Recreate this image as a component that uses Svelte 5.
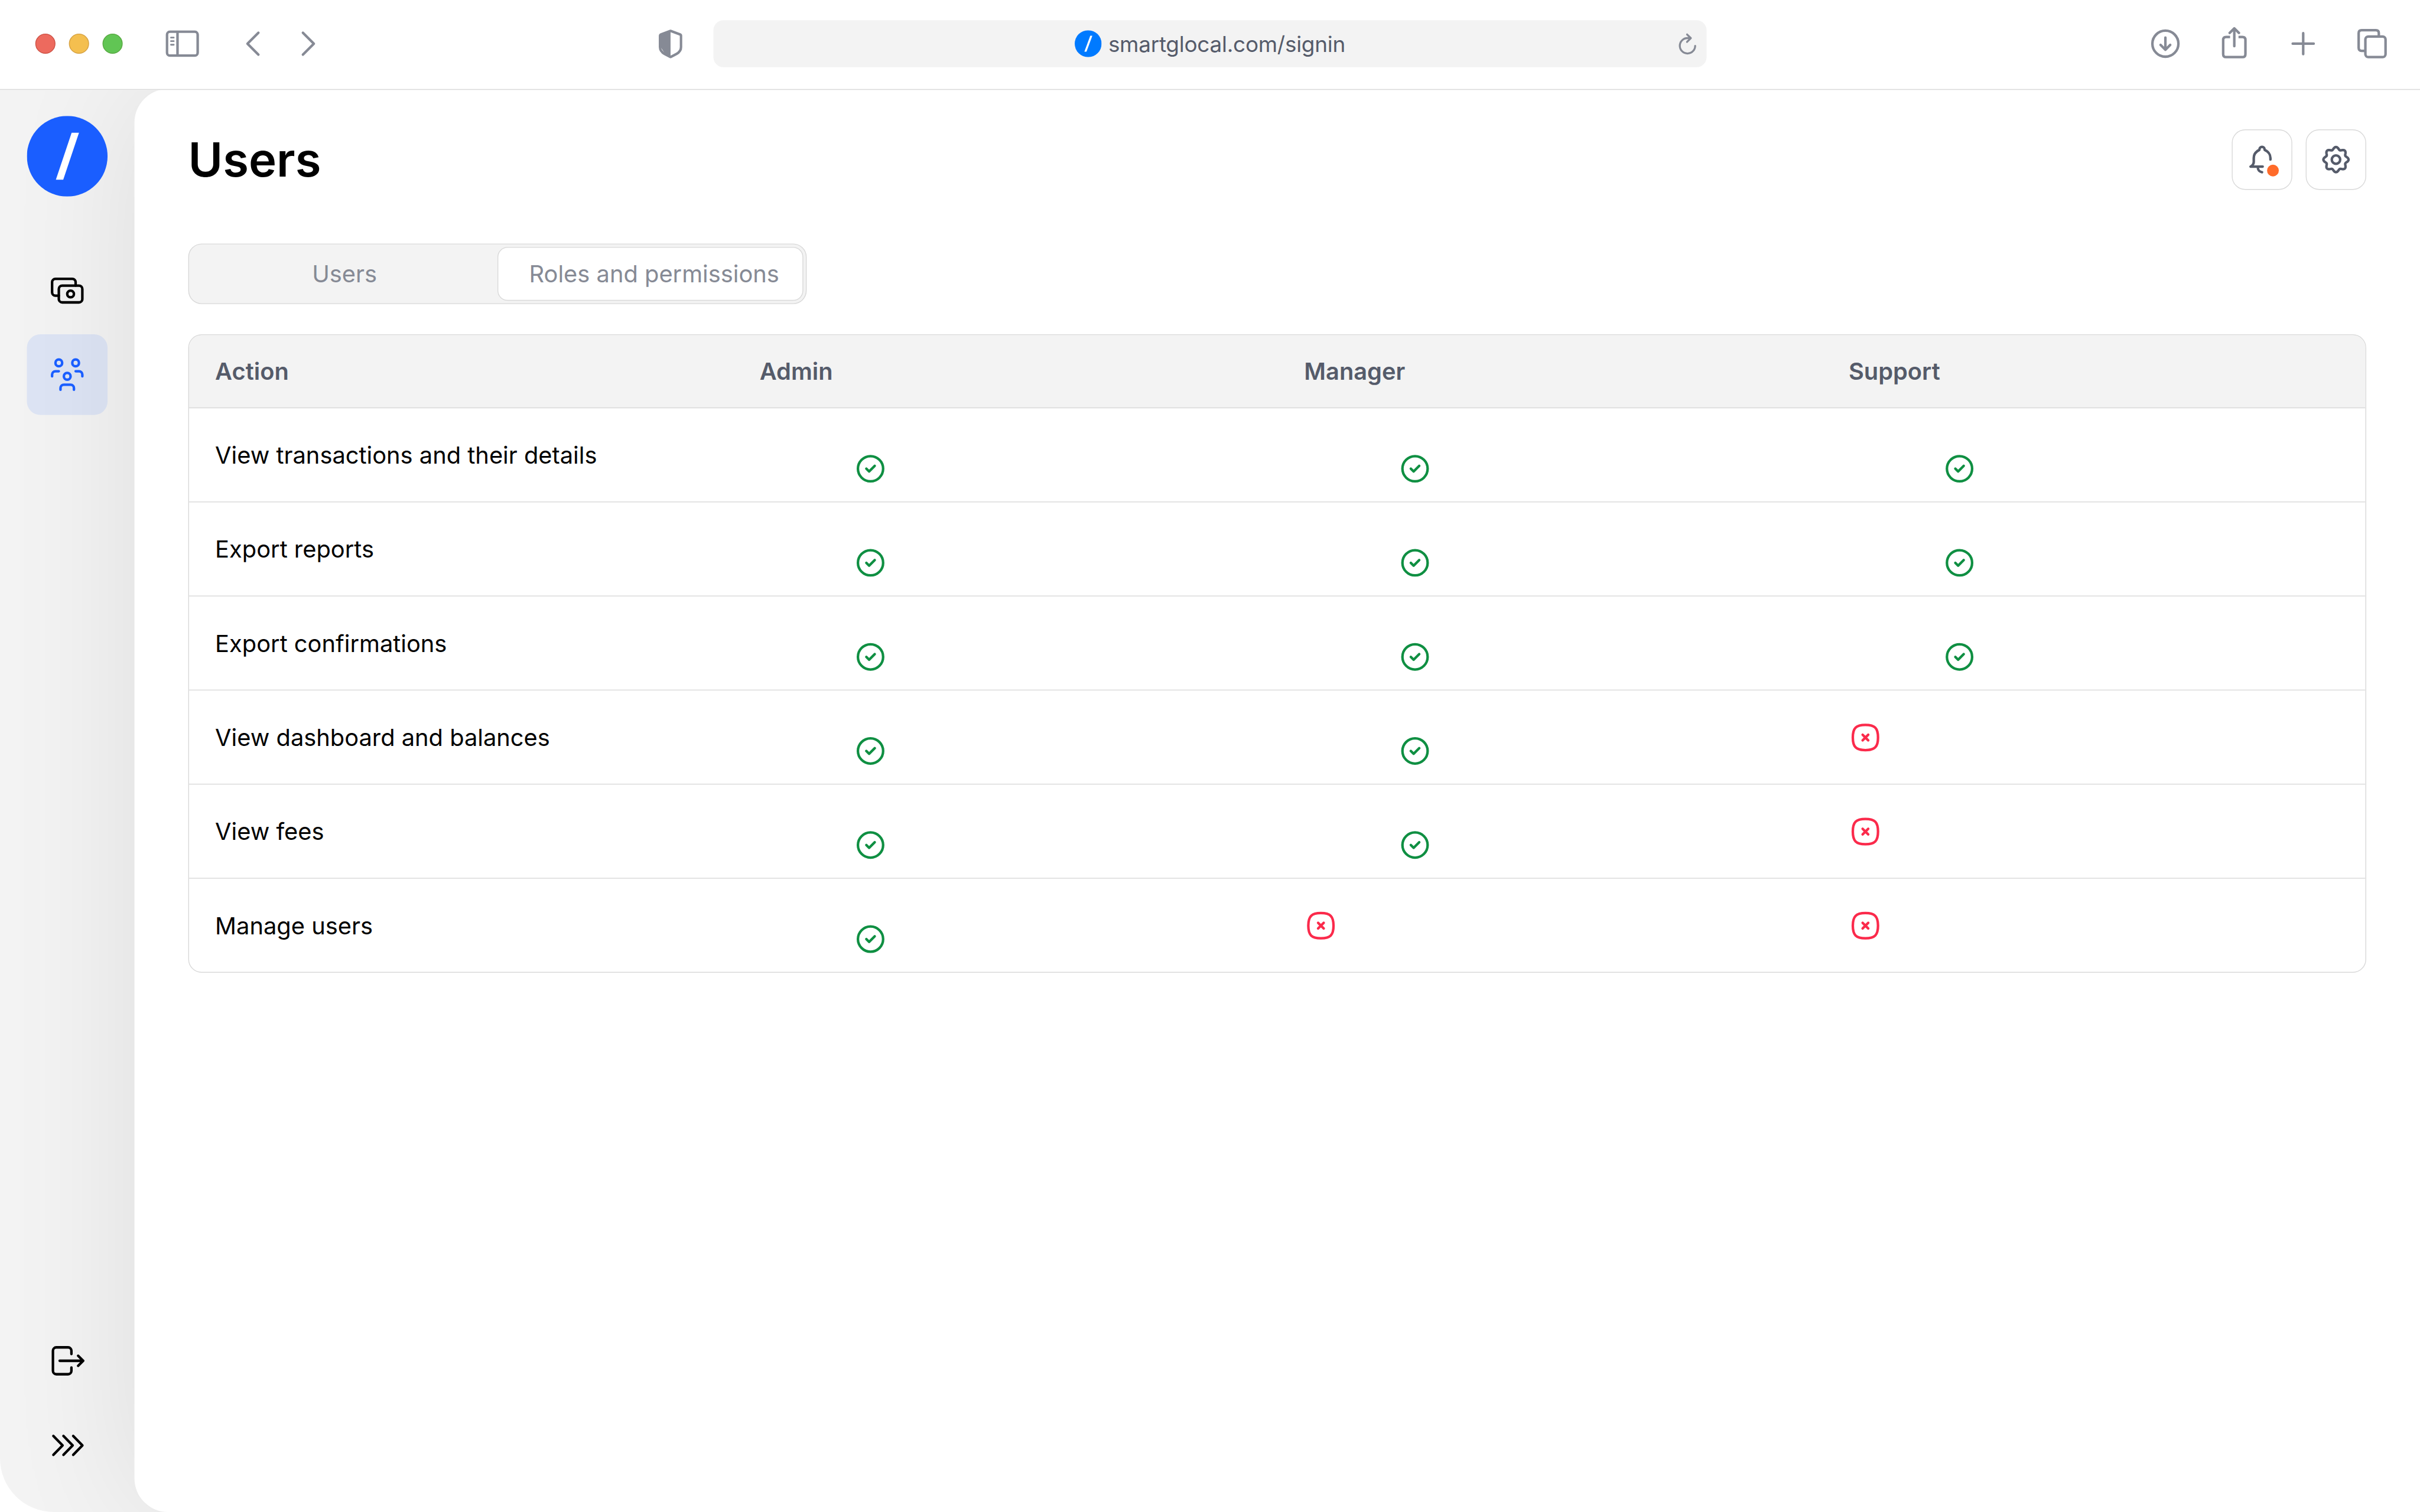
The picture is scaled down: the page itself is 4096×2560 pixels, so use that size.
<script lang="ts">
  type Access = boolean;

  const columns = ['Action', 'Admin', 'Manager', 'Support'];

  const permissions: { action: string; access: Access[] }[] = [
    { action: 'View transactions and their details', access: [true, true, true] },
    { action: 'Export reports', access: [true, true, true] },
    { action: 'Export confirmations', access: [true, true, true] },
    { action: 'View dashboard and balances', access: [true, true, false] },
    { action: 'View fees', access: [true, true, false] },
    { action: 'Manage users', access: [true, false, false] }
  ];

  const tabs = ['Users', 'Roles and permissions'];
  let activeTab = $state(1);

  // Eight-lobed outline around the centre of a 20x20 box
  function gearPath() {
    const points: string[] = [];
    for (let i = 0; i <= 160; i++) {
      const a = (i / 160) * Math.PI * 2;
      const r = 6.77 + 0.74 * Math.cos(8 * a) - 0.03 * Math.cos(16 * a);
      points.push(`${(10 + r * Math.sin(a)).toFixed(2)} ${(10 - r * Math.cos(a)).toFixed(2)}`);
    }
    return 'M' + points.join('L') + 'Z';
  }
</script>

<div class="viewport">
  <div class="window">
    <header class="toolbar">
      <div class="toolbar-left">
        <div class="lights">
          <span class="light red"></span>
          <span class="light yellow"></span>
          <span class="light green"></span>
        </div>
        <svg class="panel-icon" viewBox="0 0 80 64">
          <rect x="3.5" y="3.5" width="73" height="57" rx="7" />
          <path d="M28.500 4v56" />
          <path class="thin" d="M13 17.500h6.500M13 26h6.500M13 34.500h6.500" />
        </svg>
        <svg class="arrow back" viewBox="0 0 36 60"><path d="M31 4L5 30l26 26" /></svg>
        <svg class="arrow" viewBox="0 0 36 60"><path d="M5 4l26 26L5 56" /></svg>
      </div>

      <svg class="shield" viewBox="0 0 56 70">
        <path class="fill" d="M28 3L5 12V44L14 58L28 66Z" />
        <path d="M28 4.500L50.500 12.800Q53 13.800 53 16.500V43Q53 53 42 59.500L28 67L14 59.500Q3 53 3 43V16.500Q3 13.800 5.500 12.800Z" />
      </svg>
      <div class="address">
        <svg class="favicon" viewBox="0 0 64 64">
          <circle cx="32" cy="32" r="32" />
          <path d="M37 13h5L28 51h-5z" />
        </svg>
        <span>smartglocal.com/signin</span>
        <svg class="reload" viewBox="0 0 48 56">
          <path d="M42.800 33a18.300 18.300 0 1 1-18.300-18.300h7M23.500 6l9 8.700-9 9.100" />
        </svg>
      </div>

      <div class="toolbar-right">
        <svg viewBox="0 0 80 80">
          <circle cx="40" cy="40" r="31" />
          <path d="M40 25.500v29M28.500 43L40 54.500 51.500 43" />
        </svg>
        <svg viewBox="0 0 80 80">
          <path class="butt" d="M30 24h-9.500q-7 0-7 7v34q0 7 7 7h39q7 0 7-7V31q0-7-7-7H50" />
          <path d="M40 4v42M29 14.500L40 3.500l11 11" />
        </svg>
        <svg viewBox="0 0 80 80"><path d="M40 15v50M15 40h50" /></svg>
        <svg viewBox="0 0 80 80">
          <rect x="24" y="23" width="48" height="49" rx="7" />
          <path class="butt" d="M56 22v-7q0-7-7-7H15q-7 0-7 7v35q0 7 7 7h8" />
        </svg>
      </div>
    </header>

    <div class="body">
      <aside class="sidebar">
        <svg class="logo" viewBox="0 0 192 192">
          <circle cx="96" cy="96" r="96" />
          <path d="M106.500 40h17.500L86.500 152H69z" />
        </svg>
        <nav>
          <button class="nav-item" aria-label="Transactions">
            <svg viewBox="0 0 24 24">
              <path d="M17 9V7a2 2 0 0 0-2-2H5a2 2 0 0 0-2 2v6a2 2 0 0 0 2 2h2" />
              <rect x="7" y="9" width="14" height="10" rx="2" />
              <circle cx="14" cy="14" r="2" />
            </svg>
          </button>
          <button class="nav-item active" aria-label="Users">
            <svg viewBox="0 0 24 24">
              <circle cx="7" cy="5" r="2" />
              <circle cx="17" cy="5" r="2" />
              <circle cx="12" cy="13" r="2" />
              <path d="M3 13v-1a2 2 0 0 1 2-2h2M21 13v-1a2 2 0 0 0-2-2h-2M8 21v-1a2 2 0 0 1 2-2h4a2 2 0 0 1 2 2v1" />
            </svg>
          </button>
        </nav>
        <div class="nav-bottom">
          <button class="nav-item" aria-label="Log out">
            <svg viewBox="0 0 24 24">
              <path d="M14.500 8V6a2 2 0 0 0-2-2h-7a2 2 0 0 0-2 2v12a2 2 0 0 0 2 2h7a2 2 0 0 0 2-2v-2M7.500 12h14M18.500 9l3 3-3 3" />
            </svg>
          </button>
          <button class="nav-item" aria-label="Expand">
            <svg viewBox="0 0 24 24">
              <path d="M3.750 6.750l5.500 5.600-5.500 5.650M9.750 6.750l5.500 5.600-5.500 5.650M15.550 6.750l5.500 5.600-5.500 5.650" />
            </svg>
          </button>
        </div>
      </aside>

      <main>
        <div class="heading">
          <h1>Users</h1>
          <div class="actions">
            <button class="square" aria-label="Notifications">
              <svg viewBox="0 0 20 20">
                <path d="M15 10V9c0-2.200-1.500-3.900-3.300-4.700-.2-.1-.2-.3-.2-.5a1.500 1.400 0 0 0-3 0c0 .2 0 .4-.2.5C6.500 5.200 5.080 6.800 5.080 9v2.400c0 1.100-.6 2-1.880 2.770h7.200M7.500 14.200v.4c0 1.600 1 2.700 2.500 2.900" />
              </svg>
              <span class="dot"></span>
            </button>
            <button class="square" aria-label="Settings">
              <svg viewBox="0 0 20 20">
                <path d={gearPath()} />
                <circle cx="10" cy="10" r="2.500" />
              </svg>
            </button>
          </div>
        </div>

        <div class="tabs">
          {#each tabs as tab, i}
            <button class="tab" class:selected={activeTab === i} onclick={() => (activeTab = i)}>{tab}</button>
          {/each}
        </div>

        <div class="table">
          <div class="row head">
            {#each columns as column}
              <div class="cell">{column}</div>
            {/each}
          </div>
          {#each permissions as permission}
            <div class="row">
              <div class="cell">{permission.action}</div>
              {#each permission.access as allowed}
                <div class="cell" class:allowed>
                  {#if allowed}
                    <svg class="mark yes" viewBox="0 0 20 20">
                      <circle cx="10" cy="10" r="7.500" />
                      <path d="M7.500 10l1.670 1.670 3.330-3.340" />
                    </svg>
                  {:else}
                    <svg class="mark no" viewBox="0 0 20 20">
                      <path d="M2.500 10c0-5.600 1.900-7.500 7.500-7.500s7.500 1.900 7.500 7.500-1.900 7.500-7.500 7.500-7.500-1.900-7.500-7.500z" />
                      <path d="M8.330 8.330l3.340 3.340M11.670 8.330l-3.340 3.340" />
                    </svg>
                  {/if}
                </div>
              {/each}
            </div>
          {/each}
        </div>
      </main>
    </div>
  </div>
</div>

<style>
  :global(body) {
    margin: 0;
    background: #fff;
  }

  .viewport {
    width: 4096px;
    height: 2560px;
    overflow: hidden;
  }

  /* Drawn at 4x of a 1440x900 window, then fitted to the viewport */
  .window {
    display: flex;
    flex-direction: column;
    width: 5760px;
    height: 3600px;
    transform: scale(0.711111);
    transform-origin: 0 0;
    font-family: Inter, "Liberation Sans", sans-serif;
    font-size: 56px;
    color: #000;
    background: #fff;
  }

  button {
    margin: 0;
    padding: 0;
    border: 0;
    background: none;
    font: inherit;
    color: inherit;
    cursor: pointer;
  }

  svg {
    display: block;
    flex: none;
    fill: none;
    stroke: currentColor;
    stroke-linecap: round;
    stroke-linejoin: round;
  }

  .butt {
    stroke-linecap: butt;
  }

  .toolbar {
    box-sizing: border-box;
    position: relative;
    z-index: 1;
    display: flex;
    align-items: center;
    flex: none;
    height: 214px;
    padding: 0 74px 4px 84px;
    border-bottom: 2px solid #d9d9d9;
    background: #fff;
    color: #868a95;
  }

  .toolbar svg {
    stroke-width: 6;
  }

  .toolbar-left {
    display: flex;
    align-items: center;
    width: 1484px;
  }

  .lights {
    display: flex;
    gap: 32px;
    margin-right: 102px;
  }

  .light {
    box-sizing: border-box;
    width: 48px;
    height: 48px;
    border-radius: 50%;
    border: 2px solid;
  }

  .red {
    background: #ed6a5e;
    border-color: #ce5347;
  }

  .yellow {
    background: #f4bf4f;
    border-color: #d6a243;
  }

  .green {
    background: #61c554;
    border-color: #58a942;
  }

  .panel-icon {
    width: 80px;
    height: 64px;
    margin-right: 110px;
  }

  .panel-icon .thin {
    stroke-width: 4;
  }

  .arrow {
    width: 36px;
    height: 60px;
  }

  .arrow.back {
    margin-right: 96px;
  }

  .shield {
    width: 56px;
    height: 70px;
    margin-right: 74px;
  }

  .shield .fill {
    fill: currentColor;
    stroke: none;
  }

  .address {
    position: relative;
    display: flex;
    align-items: center;
    justify-content: center;
    gap: 16px;
    width: 2364px;
    height: 112px;
    border-radius: 24px;
    background: #f3f3f3;
    color: #555b6a;
    font-size: 52px;
    letter-spacing: -0.4px;
  }

  .address span {
    padding-top: 2px;
  }

  .favicon {
    width: 64px;
    height: 64px;
    fill: #007aff;
    stroke: none;
  }

  .favicon path,
  .logo path {
    fill: #fff;
  }

  .reload {
    position: absolute;
    right: 22px;
    top: 28px;
    width: 48px;
    height: 56px;
    color: #868a95;
  }

  .toolbar .reload {
    stroke-width: 4.6;
  }

  .toolbar-right {
    display: flex;
    gap: 84px;
    margin-left: auto;
  }

  .toolbar-right svg {
    width: 80px;
    height: 80px;
  }

  .body {
    display: flex;
    flex: 1;
    min-height: 0;
    border-bottom-left-radius: 128px;
    background: #f3f3f3;
    overflow: hidden;
  }

  .sidebar {
    position: relative;
    z-index: 1;
    box-sizing: border-box;
    display: flex;
    flex-direction: column;
    align-items: center;
    width: 320px;
    padding: 62px 0 64px;
  }

  .logo {
    width: 192px;
    height: 192px;
    margin-bottom: 128px;
    fill: #1a5eff;
    stroke: none;
  }

  nav,
  .nav-bottom {
    display: flex;
    flex-direction: column;
    gap: 8px;
  }

  .nav-bottom {
    margin-top: auto;
  }

  .nav-item {
    display: flex;
    align-items: center;
    justify-content: center;
    width: 192px;
    height: 192px;
    border-radius: 32px;
  }

  .nav-item.active {
    background: rgba(26, 94, 255, 0.1);
    color: #1a5eff;
  }

  .nav-item svg {
    width: 96px;
    height: 96px;
    stroke-width: 1.5;
  }

  main {
    box-sizing: border-box;
    flex: 1;
    margin-top: -2px;
    padding: 96px 128px 0;
    border-radius: 80px 0 0 80px;
    background: #fff;
    box-shadow: 0 0 320px rgba(0, 0, 0, 0.09);
  }

  .heading {
    display: flex;
    align-items: center;
    justify-content: space-between;
    height: 144px;
    margin-bottom: 128px;
  }

  h1 {
    margin: 0;
    font-size: 112px;
    line-height: 144px;
    font-weight: 600;
  }

  .actions {
    display: flex;
    gap: 32px;
  }

  .square {
    box-sizing: border-box;
    position: relative;
    display: flex;
    align-items: center;
    justify-content: center;
    width: 144px;
    height: 144px;
    border: 2px solid #d9d9d9;
    border-radius: 32px;
    color: #555b6a;
  }

  .square svg {
    width: 80px;
    height: 80px;
    stroke-width: 1.5;
  }

  .dot {
    position: absolute;
    right: 30px;
    bottom: 30px;
    width: 28px;
    height: 28px;
    border-radius: 50%;
    background: #ff6b2a;
  }

  .tabs {
    box-sizing: border-box;
    display: flex;
    width: 1472px;
    height: 144px;
    margin-bottom: 72px;
    padding: 6px;
    border: 2px solid #d9d9d9;
    border-radius: 32px;
    background: #f3f3f3;
    color: #868a95;
    letter-spacing: -0.3px;
  }

  .tab {
    box-sizing: border-box;
    width: 728px;
    border: 2px solid transparent;
    border-radius: 24px;
  }

  .tab.selected {
    padding-left: 18px;
    border-color: #d9d9d9;
    background: #fff;
  }

  .table {
    box-sizing: border-box;
    border: 2px solid #d9d9d9;
    border-radius: 32px;
    overflow: hidden;
  }

  .row {
    box-sizing: border-box;
    display: grid;
    grid-template-columns: 1294px 1296px 1296px 1fr;
    height: 224px;
    border-bottom: 2px solid #d9d9d9;
  }

  .row:last-child {
    height: 222px;
    border-bottom: 0;
  }

  .row.head {
    height: 174px;
    background: #f3f3f3;
    color: #555b6a;
    font-weight: 600;
  }

  .cell {
    display: flex;
    align-items: center;
    padding: 2px 0 0 64px;
  }

  .head .cell {
    padding-top: 0;
  }

  .cell:first-child {
    padding-left: 62px;
  }

  .cell.allowed {
    padding: 66px 0 0 288px;
  }

  .mark {
    width: 80px;
    height: 80px;
    stroke-width: 1.5;
  }

  .yes {
    color: #0f8f42;
  }

  .no {
    color: #fb2a4b;
  }
</style>
